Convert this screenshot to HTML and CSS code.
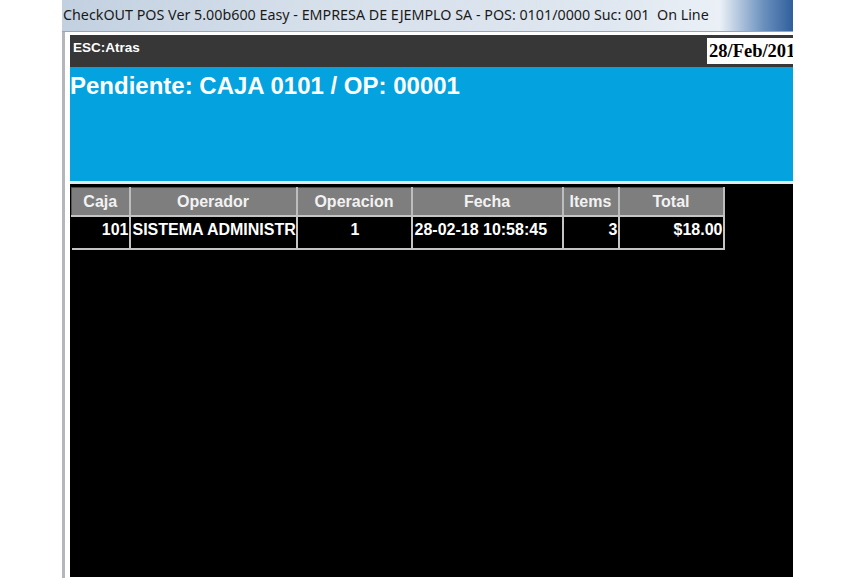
FILE: index.html
```html
<!DOCTYPE html>
<html lang="es">
<head>
    <meta charset="UTF-8">
    <title>CheckOUT POS</title>
    <link rel="stylesheet" href="styles.css">
</head>
<body>
    <div class="window">
        <div class="titlebar">CheckOUT POS Ver 5.00b600 Easy - EMPRESA DE EJEMPLO SA - POS: 0101/0000 Suc: 001&nbsp; On Line</div>
        <div class="frame">
            <div class="topbar">
                <span class="esc">ESC:Atras</span>
                <span class="date">28/Feb/2018</span>
            </div>
            <div class="banner">
                <h1>Pendiente: CAJA 0101 / OP: 00001</h1>
            </div>
            <div class="grid-area">
                <table class="grid">
                    <colgroup>
                        <col class="c-caja">
                        <col class="c-oper">
                        <col class="c-op">
                        <col class="c-fecha">
                        <col class="c-items">
                        <col class="c-total">
                    </colgroup>
                    <thead>
                        <tr>
                            <th>Caja</th>
                            <th>Operador</th>
                            <th>Operacion</th>
                            <th>Fecha</th>
                            <th>Items</th>
                            <th>Total</th>
                        </tr>
                    </thead>
                    <tbody>
                        <tr>
                            <td class="right">101</td>
                            <td>SISTEMA ADMINISTRADOR</td>
                            <td class="center">1</td>
                            <td>28-02-18 10:58:45</td>
                            <td class="right">3</td>
                            <td class="right">$18.00</td>
                        </tr>
                    </tbody>
                </table>
            </div>
        </div>
    </div>
</body>
</html>
```

FILE: styles.css
```css
body {
    margin: 0;
    background-color: #fff;
    font-family: "Liberation Sans", Arial, sans-serif;
    height: 580px;
    overflow: hidden;
}
.window {
    margin-left: 62px;
    width: 731px;
    height: 578px;
    overflow: hidden;
}
.titlebar {
    height: 31px;
    line-height: 29px;
    padding-left: 1px;
    border-bottom: 1px solid #9aa6b4;
    font-family: "Noto Sans", "Open Sans", sans-serif;
    font-size: 14.3px;
    color: #1a1a1a;
    white-space: nowrap;
    /* aero style: pale steel blue fading into a blue right end */
    background: linear-gradient(to right, #c2d0e0 0%, #d6e0eb 35%, #dfe7f0 75%, #eaf0f6 90%, #6a90bd 96%, #315f9c 100%);
}
.frame {
    height: 545px;
    padding-top: 3px;
    padding-left: 5px;
    border-left: 3px solid #b3b7bc;
    border-bottom: 1px solid #a9a9a9;
    background-color: #fff;
}
.topbar {
    display: flex;
    align-items: center;
    height: 32px;
    background-color: #373737;
    overflow: hidden;
}
.esc {
    width: 634px;
    flex-shrink: 0;
    padding-left: 3px;
    color: #fff;
    font-size: 13.5px;
    font-weight: bold;
    margin-top: -7px;
}
.date {
    flex-shrink: 0;
    height: 26px;
    line-height: 27px;
    padding-left: 2px;
    background-color: #fff;
    color: #000;
    font-family: "Liberation Serif", "Times New Roman", serif;
    font-size: 18.5px;
    font-weight: bold;
    white-space: nowrap;
}
.banner {
    height: 114px;
    background-color: #04a2df;
    border-bottom: 3px solid #e4e8ea;
}
.banner h1 {
    margin: 0;
    padding-top: 5px;
    color: #fff;
    font-size: 24px;
    line-height: 28px;
}
.grid-area {
    height: 393px;
    padding-top: 3px;
    padding-left: 1px;
    background-color: #000;
    box-sizing: border-box;
}
.grid {
    table-layout: fixed;
    border-collapse: collapse;
    width: 652px;
    font-size: 16px;
    font-weight: bold;
}
.c-caja { width: 58px; }
.c-oper { width: 167px; }
.c-op { width: 115px; }
.c-fecha { width: 151px; }
.c-items { width: 56px; }
.c-total { width: 105px; }
.grid th {
    height: 27px;
    padding: 0;
    background-color: #7e7e7e;
    color: #f2f2f2;
    font-weight: bold;
    text-align: center;
    border-top: 1px solid #4a4a4a;
    border-left: 2px solid #bdbdbd;
    border-right: 2px solid #bdbdbd;
    border-bottom: 2px solid #c4c4c4;
}
.grid th:first-child {
    border-left: 1px solid #555;
}
.grid td {
    height: 26px;
    padding: 0 0 5px 2px;
    color: #fff;
    white-space: nowrap;
    overflow: hidden;
    border-left: 2px solid #c4c4c4;
    border-right: 2px solid #c4c4c4;
    border-bottom: 2px solid #c4c4c4;
}
.grid td:first-child {
    border-left: none;
}
.grid td.right {
    text-align: right;
    padding-left: 0;
}
.grid td.center {
    text-align: center;
}
```
